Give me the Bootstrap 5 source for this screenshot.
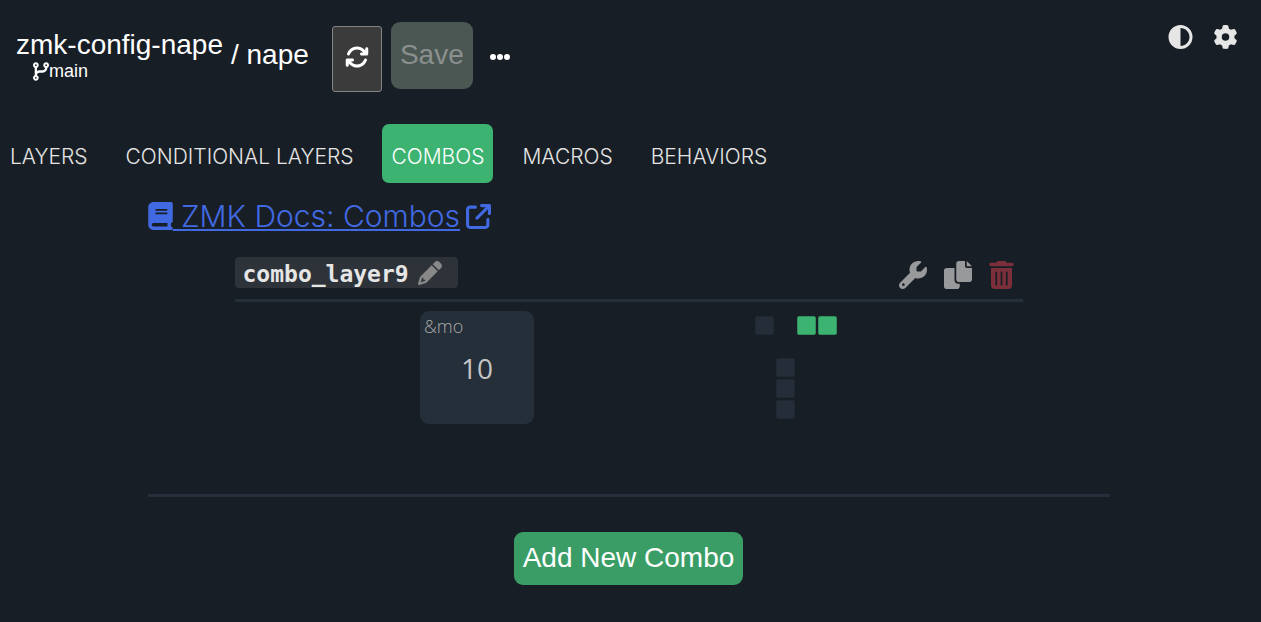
<!DOCTYPE html>
<html lang="en" data-bs-theme="dark">
<head>
<meta charset="utf-8">
<meta name="viewport" content="width=device-width, initial-scale=1">
<title>zmk-config-nape / nape</title>
<link href="https://cdn.jsdelivr.net/npm/bootstrap@5.3.0/dist/css/bootstrap.min.css" rel="stylesheet">
<style>
  body { background: #181e25; color: #fff; font-family: "Liberation Sans", Arial, sans-serif; font-size: 28px; line-height: 32px; padding-right: 4px; }
  svg { fill: currentColor; display: block; flex: none; }
  .topbar { padding: 22px 19px 0 16px; }
  .repo-block { padding-top: 7px; }
  .branch { font-size: 18px; line-height: 20px; padding-left: 17px; }
  .project { padding-top: 17px; }
  .crumb { gap: 8px; }
  .btn-sync { width: 50px; height: 66px; margin: 4px 9px 0 23px; padding: 0 0 4px; background: #3b3b3b; border: 1px solid #858585; border-radius: 3px; color: #fff; }
  .btn-save, .btn-save:disabled { height: 67px; width: 82px; padding: 0 0 2px; font-size: 28px; background: #4a5753; color: #8b8f8e; border: 0; border-radius: 9px; opacity: 1; }
  .btn-more { height: 67px; margin-left: 16px; padding: 3px 0 0; border: 0; color: #fff; }
  .tools { gap: 20px; padding-top: 3px; }
  .tools .btn { color: #e6e6e6; padding: 0; border: 0; }
  .tabs { margin-top: 32px; padding-left: 1px; gap: 20px; font-family: Inter, sans-serif; font-weight: 300; font-size: 21px; }
  .tabs .nav-link { color: #e4e4e4; padding: 19px 9px 12px; line-height: 28px; border-radius: 7px; }
  .tabs .nav-link.active { background: #3cb371; color: #fff; }
  .editor { max-width: 962px; }
  .docs { margin-top: 16px; font-family: Inter, sans-serif; font-weight: 300; font-size: 30px; line-height: 34px; color: #4169e1; text-decoration: none; }
  .docs:hover { color: #5b80f0; }
  .docs-text { margin-right: 6px; text-decoration: underline; text-decoration-thickness: 2px; text-underline-offset: 2px; }
  .combo { margin: 20px 87px 0; }
  .combo-head { border-bottom: 3px solid #252f3a; padding-bottom: 11px; }
  .combo-name { background: #2e333a; color: #e6e6e6; border: 0; border-radius: 4px; padding: 0 16px 0 8px; gap: 9px; height: 31px; font: 700 23px/31px "DejaVu Sans Mono", monospace; }
  .combo-name span { padding-top: 3px; }
  .combo-name svg { color: #888; }
  .combo-tools { gap: 17px; padding: 4px 9px 0 0; margin-bottom: -6px; }
  .combo-tools .btn { padding: 0; border: 0; color: #97999b; }
  .combo-tools .btn-remove { color: #7b2f3a; }
  .combo-body { gap: 221px; padding: 9px 0 70px; }
  .keycap { width: 114px; height: 113px; border: 0; border-radius: 9px; background: #252f39; color: #c4c4c4; padding: 4px; font-family: "Open Sans", sans-serif; }
  .behavior { font-size: 18px; line-height: 22px; font-weight: 300; color: #aaa; }
  .param { font-size: 28px; line-height: 62px; }
  .keymap { display: grid; grid-template-columns: repeat(4, 19px); grid-auto-rows: 19px; gap: 2px; padding-top: 5px; }
  .keymap i { background: #252e38; border: 1px solid #202831; border-radius: 2px; }
  .keymap i.on { background: #3cb371; border-color: #338f5e; }
  .c2 { grid-column: 2; }
  .r3 { grid-row: 3; } .r4 { grid-row: 4; } .r5 { grid-row: 5; }
  .c3 { grid-column: 3; } .c4 { grid-column: 4; } .r1 { grid-row: 1; }
  .add-row { border-top: 3px solid #252e3a; padding: 35px 0; }
  .btn-add { background: #3a9d66; color: #fff; font-size: 28px; line-height: 33px; border: 0; border-radius: 9px; padding: 9px 9px 11px; }
  .btn-add:hover { background: #3cb371; color: #fff; }
</style>
</head>
<body>
<header class="topbar d-flex align-items-start">
  <div class="crumb d-flex align-items-start">
    <div class="repo-block">
      <div>zmk-config-nape</div>
      <div class="branch d-flex align-items-center">
        <svg width="16" height="19" viewBox="0 0 448 512"><path d="M160 80c0 32.800-19.700 61-48 73.300v87.800c18.800-10.900 40.700-17.100 64-17.100h96c35.300 0 64-28.700 64-64v-6.700C307.700 141 288 112.800 288 80c0-44.200 35.800-80 80-80s80 35.800 80 80c0 32.800-19.700 61-48 73.300V160c0 70.700-57.300 128-128 128H176c-35.300 0-64 28.700-64 64v6.700c28.300 12.300 48 40.500 48 73.300c0 44.200-35.800 80-80 80s-80-35.800-80-80c0-32.800 19.700-61 48-73.300V153.300C19.700 141 0 112.800 0 80C0 35.800 35.800 0 80 0s80 35.800 80 80zM80 104a24 24 0 1 0 0-48 24 24 0 1 0 0 48zm312-24a24 24 0 1 0 -48 0 24 24 0 1 0 48 0zM80 456a24 24 0 1 0 0-48 24 24 0 1 0 0 48z" fill-rule="evenodd"/></svg>
        <span>main</span>
      </div>
    </div>
    <div class="project">/ nape</div>
  </div>
  <button type="button" class="btn btn-sync d-flex align-items-center justify-content-center" aria-label="Refresh">
    <svg width="24" height="24" viewBox="0 0 512 512"><path d="M105.100 202.600c7.700-21.800 20.200-42.300 37.800-59.800c62.500-62.500 163.800-62.500 226.300 0L386.300 160H352c-17.700 0-32 14.300-32 32s14.300 32 32 32H463.900c17.700 0 32-14.300 32-32V80c0-17.700-14.300-32-32-32s-32 14.300-32 32v35.200L414.400 97.600c-87.500-87.500-229.300-87.500-316.800 0C73.200 122 55.600 150.700 44.800 181.400c-5.900 16.700 2.900 34.900 19.500 40.800s34.900-2.900 40.800-19.500zM39 289.300c-5 1.500-9.800 4.200-13.700 8.200c-4 4-6.700 8.800-8.100 14c-.3 1.200-.6 2.500-.8 3.800c-.3 1.700-.4 3.400-.4 5.100V432c0 17.700 14.300 32 32 32s32-14.300 32-32V396.900l17.600 17.500c87.500 87.400 229.300 87.400 316.700 0c24.400-24.400 42.100-53.100 52.900-83.700c5.900-16.700-2.900-34.900-19.500-40.800s-34.900 2.900-40.800 19.500c-7.700 21.800-20.200 42.300-37.800 59.800c-62.500 62.500-163.800 62.500-226.300 0L125.600 352H160c17.700 0 32-14.300 32-32s-14.300-32-32-32H48.400c-3.200 0-6.400.4-9.400 1.300z"/></svg>
  </button>
  <button type="button" class="btn btn-save" disabled>Save</button>
  <button type="button" class="btn btn-more d-flex align-items-center" aria-label="More">
    <svg width="22" height="24" viewBox="0 0 22 24"><circle cx="4" cy="12" r="3"/><circle cx="11" cy="12" r="3"/><circle cx="18" cy="12" r="3"/></svg>
  </button>
  <div class="tools d-flex ms-auto">
    <button type="button" class="btn" aria-label="Toggle theme">
      <svg width="25" height="24" viewBox="0 0 512 512"><path d="M448 256c0-106-86-192-192-192V448c106 0 192-86 192-192zM0 256a256 256 0 1 1 512 0A256 256 0 1 1 0 256z"/></svg>
    </button>
    <button type="button" class="btn" aria-label="Settings">
      <svg width="25" height="24" viewBox="0 0 512 512"><path d="M495.900 166.600c3.200 8.700.5 18.400-6.400 24.600l-43.300 39.400c1.100 8.300 1.700 16.800 1.700 25.400s-.6 17.100-1.700 25.400l43.300 39.400c6.900 6.200 9.600 15.900 6.400 24.600c-4.400 11.900-9.700 23.300-15.800 34.300l-4.700 8.100c-6.600 11-14 21.400-22.100 31.200c-5.900 7.200-15.700 9.600-24.500 6.800l-55.700-17.700c-13.400 10.300-28.200 18.900-44 25.400l-12.500 57.100c-2 9.100-9 16.300-18.200 17.800c-13.800 2.300-28 3.500-42.500 3.500s-28.700-1.200-42.500-3.500c-9.200-1.500-16.200-8.700-18.200-17.800l-12.500-57.100c-15.800-6.500-30.600-15.100-44-25.400L83.100 425.900c-8.800 2.800-18.600.3-24.500-6.800c-8.100-9.800-15.500-20.200-22.100-31.200l-4.700-8.100c-6.100-11-11.400-22.400-15.800-34.300c-3.200-8.700-.5-18.400 6.400-24.600l43.300-39.400C64.600 273.100 64 264.600 64 256s.6-17.100 1.700-25.400L22.400 191.200c-6.900-6.200-9.600-15.900-6.400-24.600c4.400-11.900 9.700-23.300 15.800-34.300l4.700-8.100c6.600-11 14-21.400 22.100-31.200c5.900-7.200 15.700-9.600 24.500-6.800l55.700 17.700c13.400-10.300 28.200-18.900 44-25.400l12.500-57.100c2-9.100 9-16.300 18.200-17.800C227.300 1.200 241.500 0 256 0s28.700 1.200 42.500 3.500c9.200 1.500 16.200 8.700 18.200 17.800l12.500 57.100c15.800 6.500 30.600 15.100 44 25.400l55.700-17.700c8.800-2.800 18.600-.3 24.500 6.800c8.100 9.800 15.500 20.200 22.100 31.200l4.700 8.100c6.100 11 11.400 22.400 15.800 34.300zM256 336a80 80 0 1 0 0-160 80 80 0 1 0 0 160z"/></svg>
    </button>
  </div>
</header>

<nav class="nav tabs" aria-label="Editor sections">
  <a class="nav-link" href="#layers">LAYERS</a>
  <a class="nav-link" href="#conditional">CONDITIONAL LAYERS</a>
  <a class="nav-link active" aria-current="page" href="#combos">COMBOS</a>
  <a class="nav-link" href="#macros">MACROS</a>
  <a class="nav-link" href="#behaviors">BEHAVIORS</a>
</nav>

<main class="editor mx-auto">
  <a class="docs d-inline-flex align-items-center" href="#docs">
    <svg width="25" height="28" viewBox="0 0 448 512"><path d="M96 0C43 0 0 43 0 96V416c0 53 43 96 96 96H416c17.700 0 32-14.300 32-32s-14.300-32-32-32V384c17.700 0 32-14.300 32-32V32c0-17.700-14.300-32-32-32H96zm0 384H352v64H96c-17.700 0-32-14.300-32-32s14.300-32 32-32zm32-240c0-8.800 7.200-16 16-16H336c8.800 0 16 7.200 16 16s-7.200 16-16 16H144c-8.800 0-16-7.200-16-16zm16 48H336c8.800 0 16 7.200 16 16s-7.200 16-16 16H144c-8.800 0-16-7.200-16-16s7.200-16 16-16z"/></svg>
    <span class="docs-text">&nbsp;ZMK Docs: Combos</span>
    <svg width="25" height="25" viewBox="0 0 512 512"><path d="M320 0c-17.700 0-32 14.300-32 32s14.300 32 32 32h82.700L201.400 265.400c-12.500 12.500-12.500 32.800 0 45.300s32.800 12.500 45.300 0L448 109.300V192c0 17.700 14.300 32 32 32s32-14.300 32-32V32c0-17.700-14.300-32-32-32H320zM80 32C35.800 32 0 67.800 0 112V432c0 44.200 35.800 80 80 80H400c44.200 0 80-35.800 80-80V320c0-17.700-14.300-32-32-32s-32 14.300-32 32V432c0 8.800-7.200 16-16 16H80c-8.800 0-16-7.200-16-16V112c0-8.800 7.200-16 16-16H192c17.700 0 32-14.300 32-32s-14.300-32-32-32H80z"/></svg>
  </a>

  <section class="combo">
    <div class="combo-head d-flex justify-content-between align-items-start">
      <button type="button" class="combo-name d-flex align-items-center">
        <span>combo_layer9</span>
        <svg width="24" height="24" viewBox="0 0 512 512"><path d="M421.600 219.700L291.700 89.800 58.600 322.900c-10.400 10.400-18 23.300-22.200 37.400L1 480.700c-2.500 8.400-.2 17.500 6.100 23.700s15.300 8.500 23.700 6.100l120.300-35.400c14.100-4.200 27-11.800 37.400-22.200L421.600 219.700zM160 399.400l-9.100 22.700c-4 3.100-8.500 5.400-13.300 6.900L59.400 452l23-78.100c1.400-4.900 3.800-9.400 6.900-13.300l22.700-9.100v32c0 8.800 7.200 16 16 16h32zM362.700 18.700L314.300 67.100l129.900 129.900 48.400-48.400c25-25 25-65.500 0-90.500L453.300 18.700c-25-25-65.500-25-90.500 0z"/></svg>
      </button>
      <div class="combo-tools d-flex">
        <button type="button" class="btn" aria-label="Configure">
          <svg width="28" height="28" viewBox="0 0 512 512"><path d="M352 320c88.400 0 160-71.600 160-160c0-15.300-2.200-30.100-6.200-44.200c-3.100-10.800-16.400-13.200-24.300-5.300l-76.800 76.800c-3 3-7.100 4.700-11.300 4.700H336c-8.800 0-16-7.200-16-16V118.600c0-4.200 1.700-8.300 4.700-11.300l76.800-76.800c7.900-7.900 5.400-21.200-5.300-24.300C382.100 2.200 367.300 0 352 0C263.600 0 192 71.600 192 160c0 19.100 3.400 37.500 9.500 54.500L19.900 396.100C7.200 408.800 0 426.100 0 444.100C0 481.600 30.400 512 67.900 512c18 0 35.300-7.200 48-19.900L297.500 310.500c17 6.200 35.400 9.500 54.500 9.500zM80 408a24 24 0 1 1 0 48 24 24 0 1 1 0-48z"/></svg>
        </button>
        <button type="button" class="btn" aria-label="Duplicate">
          <svg width="28" height="28" viewBox="0 0 512 512"><path d="M384 96V0H272c-26.500 0-48 21.500-48 48v288c0 26.500 21.500 48 48 48h192c26.500 0 48-21.500 48-48V128h-96c-17.600 0-32-14.400-32-32zM416 0v96h96L416 0zM192 352V128H48c-26.500 0-48 21.500-48 48v288c0 26.500 21.500 48 48 48h192c26.500 0 48-21.500 48-48v-48h-32c-35.300 0-64-28.700-64-64z"/></svg>
        </button>
        <button type="button" class="btn btn-remove" aria-label="Delete">
          <svg width="25" height="28" viewBox="0 0 448 512"><path d="M135.200 17.700L128 32H32C14.300 32 0 46.300 0 64S14.300 96 32 96H416c17.700 0 32-14.300 32-32s-14.300-32-32-32H320l-7.200-14.300C307.400 6.800 296.300 0 284.200 0H163.800c-12.100 0-23.200 6.800-28.600 17.700z"/><path fill-rule="evenodd" d="M32 128H416V448c0 35.300-28.700 64-64 64H96c-35.300 0-64-28.700-64-64zM112 208v224a16 16 0 0 0 32 0V208a16 16 0 0 0-32 0zM208 208v224a16 16 0 0 0 32 0V208a16 16 0 0 0-32 0zM304 208v224a16 16 0 0 0 32 0V208a16 16 0 0 0-32 0z"/></svg>
        </button>
      </div>
    </div>
    <div class="combo-body d-flex justify-content-center align-items-start">
      <button type="button" class="keycap d-flex flex-column align-items-start">
        <span class="behavior">&amp;mo</span>
        <span class="param w-100 text-center">10</span>
      </button>
      <div class="keymap" role="img" aria-label="Key positions">
        <i></i><i class="on r1 c3"></i><i class="on r1 c4"></i>
        <i class="r3 c2"></i><i class="r4 c2"></i><i class="r5 c2"></i>
      </div>
    </div>
  </section>

  <div class="add-row text-center">
    <button type="button" class="btn btn-add">Add New Combo</button>
  </div>
</main>
<script src="https://cdn.jsdelivr.net/npm/bootstrap@5.3.0/dist/js/bootstrap.bundle.min.js"></script>
</body>
</html>
